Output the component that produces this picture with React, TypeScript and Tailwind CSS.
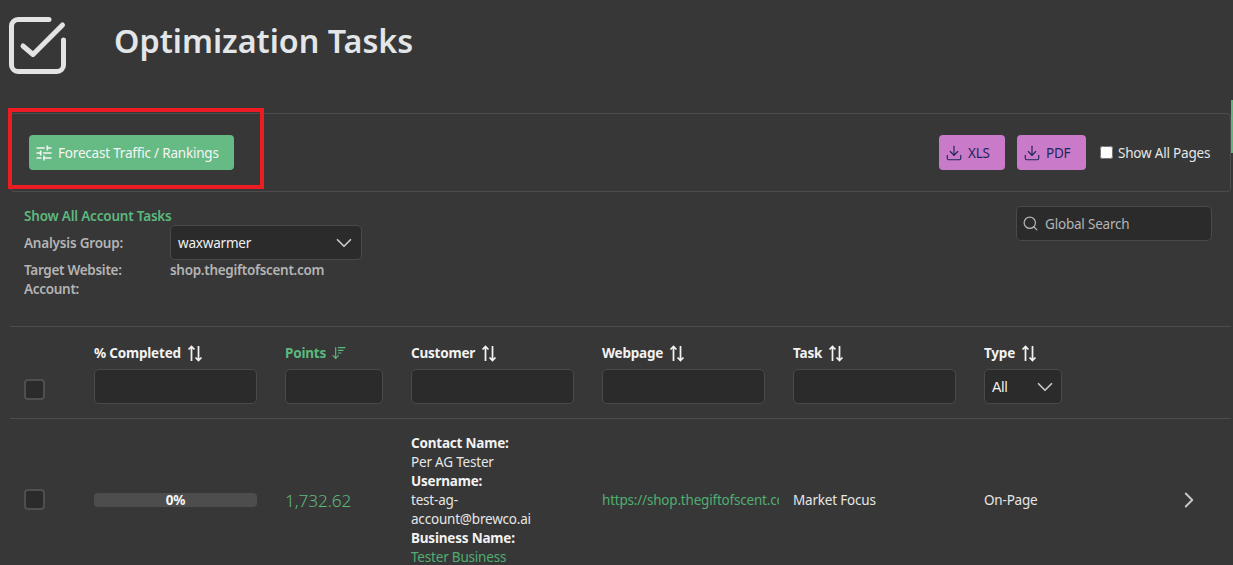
import { ChevronDown, ChevronRight, Download, Search, ArrowDownWideNarrow } from "lucide-react";
import { MdTune } from "react-icons/md";

// Up / down sort arrows shown next to each column title
const SortIcon = () => (
  <svg width="16" height="17" viewBox="0 0 16 17" fill="none" stroke="currentColor" strokeWidth="1.75" className="ml-[6px] shrink-0">
    <path d="M4.500 16V1.500M1.500 4.500l3-3 3 3" />
    <path d="M11.500 1v14.500M8.500 12.500l3 3 3-3" />
  </svg>
);

const HeaderCell = ({ title }: { title: string }) => (
  <div className="flex h-[18px] items-center pt-[2px] font-bold text-[#f2f2f2]">
    {title}
    <SortIcon />
  </div>
);

const FilterInput = () => (
  <input
    type="text"
    className="mt-[8px] h-[35px] w-full rounded-[5px] border border-[#4a4a4a] bg-[#2b2b2b] outline-none"
  />
);

const RowCheckbox = () => (
  <input
    type="checkbox"
    className="block h-[21px] w-[21px] appearance-none rounded-[4px] border-2 border-[#4f4f4f] bg-[#2b2b2b]"
  />
);

const ExportButton = ({ label, width }: { label: string; width: string }) => (
  <button className={`flex h-[35px] items-center gap-[5px] rounded-[4px] bg-[#c97bc9] pl-[6px] text-[#1f2557] ${width}`}>
    <Download size={18} strokeWidth={1.5} />
    <span className="pt-[2px]">{label}</span>
  </button>
);

const gridCols = "grid grid-cols-[42px_163px_98px_163px_163px_163px_78px] gap-x-[28px]";

export default function App() {
  return (
    <div
      className="relative h-[565px] overflow-hidden bg-[#373737] text-[13.5px] tracking-[-0.2px] text-[#e6e6e6]"
      style={{ fontFamily: '"Noto Sans", sans-serif' }}
    >
      {/* Page title */}
      <header className="flex h-[113px] items-start pl-[8px] pt-[16px]">
        <svg width="60" height="60" viewBox="0 0 60 60" fill="none" stroke="#e3e3e3" strokeWidth="5" strokeLinecap="round" strokeLinejoin="round">
          <path d="M41 3.500H10a6.500 6.500 0 0 0-6.500 6.500v39a6.500 6.500 0 0 0 6.500 6.500h39a6.500 6.500 0 0 0 6.500-6.500V24" />
          <path d="M15 30l10 8.500L54.500 9" />
        </svg>
        <h1 className="ml-[46px] text-[32.3px] leading-[48px] font-semibold tracking-normal text-[#e3e6e8]">
          Optimization Tasks
        </h1>
      </header>

      {/* Toolbar */}
      <section className="ml-[10px] flex h-[79px] w-[1221px] items-center justify-between rounded-[4px] border border-[#4d4d4d] pl-[18px] pr-[19px]">
        <button className="flex h-[35px] w-[205px] items-center gap-[4px] rounded-[4px] bg-[#66bb85] pl-[5px] text-[#f5f5f5]">
          <MdTune size={20} />
          <span className="pt-[2px]">Forecast Traffic / Rankings</span>
        </button>
        <div className="flex items-center">
          <ExportButton label="XLS" width="w-[66px]" />
          <div className="ml-[12px]">
            <ExportButton label="PDF" width="w-[69px]" />
          </div>
          <label className="ml-[14px] flex items-center text-[#e6e6e6]">
            <input type="checkbox" className="h-[13px] w-[13px]" />
            <span className="ml-[5px] mt-[2px] w-[93px] whitespace-nowrap">Show All Pages</span>
          </label>
        </div>
      </section>

      {/* Analysis details */}
      <section className="flex h-[134px] justify-between pl-[24px] pr-[21px]">
        <div className="pt-[15px] font-semibold text-[#b4b4b4]">
          <div className="h-[18px] leading-[18px] text-[#5cb97e]">Show All Account Tasks</div>
          <div className="flex items-center">
            <div className="w-[146px] pt-[2px]">Analysis Group:</div>
            <div className="flex h-[35px] w-[192px] items-center justify-between rounded-[5px] border border-[#4a4a4a] bg-[#2b2b2b] pl-[7px] pr-[4px] font-normal text-[#f0f0f0]">
              <span className="pt-[2px]">waxwarmer</span>
              <ChevronDown size={26} strokeWidth={1.6} className="text-[#c8c8c8]" />
            </div>
          </div>
          <div className="flex h-[19px] items-center pt-[2px] tracking-[-0.3px]">
            <div className="w-[146px]">Target Website:</div>
            <div>shop.thegiftofscent.com</div>
          </div>
          <div className="flex h-[19px] items-center pt-[2px] tracking-[-0.3px]">Account:</div>
        </div>
        <div className="pt-[14px]">
          <div className="flex h-[35px] w-[196px] items-center rounded-[5px] border border-[#4a4a4a] bg-[#2b2b2b] pl-[5px] text-[#b4b4b4]">
            <Search size={17} strokeWidth={1.75} />
            <span className="ml-[6px] pt-[2px]">Global Search</span>
          </div>
        </div>
      </section>

      {/* Task table */}
      <section className="ml-[10px] w-[1221px]">
        <div className="h-[93px] border-y border-[#4d4d4d] pl-[14px] pt-[16px]">
          <div className={gridCols}>
            <div className="flex items-end pb-[4px]">
              <RowCheckbox />
            </div>
            <div>
              <HeaderCell title="% Completed" />
              <FilterInput />
            </div>
            <div>
              <div className="flex h-[18px] items-center pt-[2px] font-bold text-[#5cb97e]">
                Points
                <ArrowDownWideNarrow size={16} strokeWidth={1.75} className="ml-[5px]" />
              </div>
              <FilterInput />
            </div>
            <div>
              <HeaderCell title="Customer" />
              <FilterInput />
            </div>
            <div>
              <HeaderCell title="Webpage" />
              <FilterInput />
            </div>
            <div>
              <HeaderCell title="Task" />
              <FilterInput />
            </div>
            <div>
              <HeaderCell title="Type" />
              <div className="mt-[8px] flex h-[35px] w-full items-center justify-between rounded-[5px] border border-[#4a4a4a] bg-[#2b2b2b] pl-[7px] pr-[3px] text-[14px] tracking-normal text-[#f0f0f0]" style={{ fontFamily: '"Liberation Sans", sans-serif' }}>
                <span className="pt-[2px]">All</span>
                <ChevronDown size={26} strokeWidth={1.6} className="text-[#c8c8c8]" />
              </div>
            </div>
          </div>
        </div>

        <div className="relative pl-[14px] pt-[13px]">
          <div className={`${gridCols} items-center`}>
            <div>
              <RowCheckbox />
            </div>
            <div>
              <div className="flex h-[14px] items-center justify-center rounded-[4px] bg-[#4d4d4d] pt-[1px] font-bold text-[#f5f5f5]">
                0%
              </div>
            </div>
            <div className="pt-[2px] text-[17.2px] font-light tracking-[-0.1px] text-[#5cb97e]">1,732.62</div>
            <div className="pt-[2px] leading-[19px]">
              <div className="font-bold text-[#f2f2f2]">Contact Name:</div>
              <div>Per AG Tester</div>
              <div className="font-bold text-[#f2f2f2]">Username:</div>
              <div>test-ag-</div>
              <div>account@brewco.ai</div>
              <div className="font-bold text-[#f2f2f2]">Business Name:</div>
              <div className="text-[#4fae72]">Tester Business</div>
            </div>
            <div className="w-[177px] overflow-hidden whitespace-nowrap pt-[2px] text-[#4fae72]">
              https://shop.thegiftofscent.com
            </div>
            <div className="pt-[2px]">Market Focus</div>
            <div className="pt-[2px]">On-Page</div>
          </div>
          <ChevronRight size={26} strokeWidth={1.75} className="absolute left-[1166px] top-[68px] text-[#c8c8c8]" />
        </div>
      </section>

      {/* Annotation and scrollbar marker laid over the page */}
      <div className="absolute left-[8px] top-[108px] h-[81px] w-[256px] border-[4px] border-[#ed1c24]" />
      <div className="absolute right-0 top-[100px] h-[53px] w-[2px] bg-[#5cb97e]" />
    </div>
  );
}
